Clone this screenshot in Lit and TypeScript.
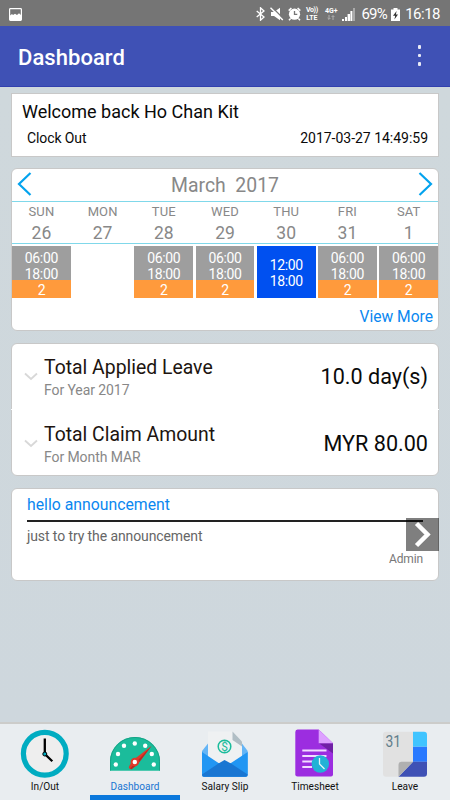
import { LitElement, html, css, svg } from "lit";
import { customElement } from "lit/decorators.js";
import { classMap } from "lit/directives/class-map.js";

interface Day {
  name: string;
  date: string;
  from?: string;
  to?: string;
  count?: string;
}

const shift = { from: "06:00", to: "18:00", count: "2" };

const DAYS: Day[] = [
  { name: "SUN", date: "26", ...shift },
  { name: "MON", date: "27" },
  { name: "TUE", date: "28", ...shift },
  { name: "WED", date: "29", ...shift },
  { name: "THU", date: "30", from: "12:00", to: "18:00" },
  { name: "FRI", date: "31", ...shift },
  { name: "SAT", date: "1", ...shift },
];

@customElement("status-bar")
class StatusBar extends LitElement {
  static styles = css`
    :host {
      display: flex;
      align-items: center;
      height: 26px;
      box-sizing: border-box;
      padding: 2px 10px 0 9px;
      background: #757575;
      color: #fff;
      font-size: 15px;
      line-height: 24px;
    }
    svg { display: block; flex: none; }
    .gap { flex: 1; }
    .bt { margin-right: 5px; }
    .mute { margin-right: 4px; }
    .alarm { margin-right: 4px; }
    .stack { display: flex; flex-direction: column; align-items: center; font-weight: 700; flex: none; }
    .volte { width: 13px; margin-right: 6px; font-size: 7px; line-height: 8px; }
    .volte .tight { letter-spacing: -.4px; }
    .net { width: 14px; font-size: 7px; line-height: 8px; margin-right: 4px; padding-bottom: 2px; }
    .sig { margin-right: 6px; }
    .pct { letter-spacing: -.7px; }
    .bat { margin: 0 5px 0 4px; }
    .time { letter-spacing: -.5px; }
  `;
  render() {
    return html`
      <svg width="13" height="13" viewBox="0 0 13 13">
        <rect x=".6" y=".6" width="11.8" height="11.8" rx=".8" fill="none" stroke="#fff" stroke-width="1.2" />
        <path d="M1 7.5 3 6 4 7 6 5.8 8 7 10 5.2 12 7V12H1Z" fill="#fff" />
      </svg>
      <span class="gap"></span>
      <svg class="bt" width="9" height="14" viewBox="0 0 9 14">
        <path d="M.7 4 8 10 4.5 13.2V.8L8 4 .7 10" fill="none" stroke="#fff" stroke-width="1.3" />
      </svg>
      <svg class="mute" width="14" height="14" viewBox="0 0 14 14">
        <path d="M1 5H4L10 .8V13.2L4 9H1Z" fill="#fff" />
        <path d="M1.4 -.4 14 12.2" stroke="#757575" stroke-width="1.4" />
        <path d="M.5 .7 12.8 13" stroke="#fff" stroke-width="1.5" />
      </svg>
      <svg class="alarm" width="13" height="14" viewBox="0 0 13 14">
        <circle cx="6.5" cy="7.2" r="5.6" fill="#fff" />
        <path d="M.7 3.6 3.4 1M12.3 3.6 9.6 1M2.6 11.5 1 13.2M10.4 11.5 12 13.2" stroke="#fff" stroke-width="1.5" />
        <path d="M6.5 4V7.4H9.3" fill="none" stroke="#757575" stroke-width="1.3" />
      </svg>
      <span class="stack volte"><span class="tight">Vo))</span><span>LTE</span></span>
      <span class="stack net"><span>4G+</span>
        <svg width="8" height="5" viewBox="0 0 8 5"><path d="M2 0V4.2M.6 3 2 4.4 3.4 3M6 5V.8M4.6 2 6 .6 7.4 2" fill="none" stroke="#b5b5b5" stroke-width=".9" /></svg>
      </span>
      <svg class="sig" width="13" height="13" viewBox="0 0 13 13">
        <path d="M0 11H2V13H0ZM3 9H5V13H3ZM5.6 6H8V13H5.6Z" fill="#fff" />
        <path d="M8.4 3H10.4V13H8.4Z" fill="#fff" />
        <path d="M11 0H13V13H11Z" fill="#aaa" />
      </svg>
      <span class="pct">69%</span>
      <svg class="bat" width="9" height="13" viewBox="0 0 9 13">
        <path d="M2.5 0H6.5V1.5H9V13H0V1.5H2.5Z" fill="#fff" />
        <path d="M5.6 3 2 7.8H4.2L3.4 11.5 7 6.6H4.9Z" fill="#333" />
      </svg>
      <span class="time">16:18</span>
    `;
  }
}

@customElement("app-bar")
class AppBar extends LitElement {
  static styles = css`
    :host {
      display: flex;
      align-items: center;
      justify-content: space-between;
      height: 61px;
      box-sizing: border-box;
      padding: 3px 29px 0 18px;
      background: #3f51b5;
      border-bottom: 1px solid #3240ae;
      color: #fff;
    }
    .title { font-size: 22px; font-weight: 500; line-height: 28px; letter-spacing: .05px; }
    .more { display: flex; flex-direction: column; gap: 5px; padding-bottom: 4px; }
    .dot { width: 3.4px; height: 3.4px; border-radius: 1px; background: #e8eaf6; }
  `;
  render() {
    return html`
      <span class="title">Dashboard</span>
      <span class="more"><i class="dot"></i><i class="dot"></i><i class="dot"></i></span>
    `;
  }
}

@customElement("week-card")
class WeekCard extends LitElement {
  static styles = css`
    :host { display: block; height: 100%; }
    .head {
      display: flex;
      justify-content: space-between;
      height: 32px;
      padding: 0 5px 0 5px;
      border-bottom: 1px solid #80d8ea;
    }
    .head svg { margin-top: 2px; }
    .month { font-size: 19.4px; line-height: 30px; color: #888; padding-top: 2px; white-space: pre; }
    .days { display: grid; grid-template-columns: repeat(7, 1fr); gap: 2.4px; }
    .names {
      height: 42px;
      box-sizing: border-box;
      border-bottom: 1px solid #80d8ea;
      margin-bottom: 2px;
      text-align: center;
      color: #888;
    }
    .name { font-size: 13px; line-height: 18px; padding-top: 1px; letter-spacing: .1px; }
    .date { font-size: 17.5px; line-height: 24px; }
    .cell {
      height: 52px;
      display: flex;
      flex-direction: column;
      color: #fff;
      text-align: center;
      font-size: 14px;
      letter-spacing: -.35px;
      line-height: 16px;
    }
    .shift { background: #9e9e9e; }
    .today { background: #0050f0; }
    .times { height: 34px; padding-top: 4px; box-sizing: border-box; flex: none; }
    .today .times { padding-top: 11px; height: 52px; }
    .count { height: 18px; background: #ff9a3c; line-height: 20px; }
    .more { text-align: right; padding: 8px 5px 0 0; font-size: 15.6px; line-height: 22px; color: #0a87f0; }
  `;
  render() {
    return html`
      <div class="head">
        <svg width="15" height="25" viewBox="0 0 15 25"><path d="M13.5 2 2 13 13.5 24" fill="none" stroke="#03a3ee" stroke-width="2.2" /></svg>
        <span class="month">March  2017</span>
        <svg width="15" height="25" viewBox="0 0 15 25"><path d="M1.5 2 13 13 1.5 24" fill="none" stroke="#03a3ee" stroke-width="2.2" /></svg>
      </div>
      <div class="days names">
        ${DAYS.map((d) => html`<div><div class="name">${d.name}</div><div class="date">${d.date}</div></div>`)}
      </div>
      <div class="days">
        ${DAYS.map(
          (d) => html`<div class=${classMap({ cell: true, shift: !!d.count, today: !!d.from && !d.count })}>
            ${d.from ? html`<div class="times">${d.from}<br />${d.to}</div>` : ""}
            ${d.count ? html`<div class="count">${d.count}</div>` : ""}
          </div>`
        )}
      </div>
      <div class="more">View More</div>
    `;
  }
}

@customElement("tab-bar")
class TabBar extends LitElement {
  static styles = css`
    :host {
      display: grid;
      grid-template-columns: repeat(5, 1fr);
      height: 78px;
      box-sizing: border-box;
      border-top: 2px solid #ccccca;
      background: #e9edf0;
    }
    .tab {
      display: flex;
      flex-direction: column;
      align-items: center;
      border-bottom: 5px solid transparent;
      font-size: 10.1px;
      line-height: 14px;
      color: #111;
    }
    .tab svg { display: block; margin: 4px 0 0; flex: none; }
    .active { color: #1976d2; border-bottom-color: #0b78dc; }
    .num { font-size: 16px; fill: #607d8b; font-family: Roboto, sans-serif; }
    .coin { font-size: 12px; fill: #1bbc9b; font-family: Roboto, sans-serif; text-anchor: middle; }
  `;
  clock() {
    return svg`
      <circle cx="24.8" cy="25.8" r="21.4" fill="#eee" stroke="#00acc1" stroke-width="5.2" />
      <path d="M24.8 10.5V26L32.3 33.3" fill="none" stroke="#000" stroke-width="2.3" />
      <circle cx="24.8" cy="26" r="2" fill="#00acc1" stroke="#000" stroke-width="1" />`;
  }
  gauge() {
    const dots = [[5.8, 36.5], [8, 26], [14, 17.8], [24.8, 15.5], [35.2, 17.8], [41.8, 26], [43.8, 36.5]];
    return svg`
      <path d="M0 42.7V33.5A25 24.5 0 0 1 50 33.5V42.7Z" fill="#1bbc9b" />
      <path d="M.5 42.5V33.5A24.5 24 0 0 1 49.5 33.5V42.5" fill="none" stroke="#16a386" stroke-width="1" />
      ${dots.map(([x, y]) => svg`<circle cx=${x} cy=${y} r="2.2" fill="#fff" />`)}
      <path d="M41.5 18 27.5 36.5 21.5 41.2Q18.5 41.5 19 38.5L22.5 32.5Z" fill="#e03a2b" />
      <path d="M41.5 18 27.5 36.5 21.5 41.2 20 40.5Z" fill="#b92b22" />
      <circle cx="24.8" cy="34" r="4.2" fill="#e03a2b" /><circle cx="24.8" cy="34" r="2.2" fill="#fff" />`;
  }
  slip() {
    return svg`
      <path d="M2 23 8 15.5H42L47.7 23V46.5Q47.7 48.7 45.5 48.7H4Q2 48.7 2 46.5Z" fill="#64b5f6" />
      <path d="M8 3.5H32.5L42 13V36H8Z" fill="#eff1f2" />
      <path d="M32.5 3.5 42 13.5V18.5L32.5 12Z" fill="#b0bec5" />
      <circle cx="24.5" cy="18.5" r="6.3" fill="none" stroke="#1bbc9b" stroke-width="1.5" />
      <text class="coin" x="24.5" y="22.7">$</text>
      <path d="M2 24 18.5 35 24.5 36 31 35 47.7 24V46.5Q47.7 48.7 45.5 48.7H4Q2 48.7 2 46.5Z" fill="#2196f3" />
      <path d="M2 46.5 18.5 35.5 24.5 38 31 35.5 47.7 46.5Q47.7 48.7 45.5 48.7H4Q2 48.7 2 46.5Z" fill="#1976d2" />
      <path d="M18.5 35.5 24.5 32 31 35.5 24.5 39Z" fill="#1976d2" />`;
  }
  sheet() {
    return svg`
      <path d="M7.5 1.5H28.7L43 15.3V46.2Q43 48.5 41 48.5H7.5Q5.3 48.5 5.3 46.2V4Q5.3 1.5 7.5 1.5Z" fill="#9c2de0" />
      <path d="M29 15.3H43V25.5Z" fill="#7020a5" />
      <path d="M28.7 1.5 43 15.3H28.7Z" fill="#dda0ff" />
      <path d="M12.3 22.5H36.5M12.3 28H36.5M12.3 33.5H28M12.3 39H22" stroke="#f2dcff" stroke-width="1.9" />
      <circle cx="30.3" cy="36" r="8.7" fill="#22b2d6" />
      <path d="M29.5 30V36L34.5 41" fill="none" stroke="#e3f6fa" stroke-width="1.3" />`;
  }
  calendar() {
    return svg`
      <path d="M6 3.8H33V33.8L18.5 48.7H6Q3 48.7 3 45.7V6.8Q3 3.8 6 3.8Z" fill="#e1e1e1" />
      <path d="M33 3.8H44Q47 3.8 47 6.8V18.8H33Z" fill="#40c4ff" />
      <path d="M33 18.8H47V33.8H33Z" fill="#2979ff" />
      <path d="M33 33.8H47V45.7Q47 48.7 44 48.7H18.5Z" fill="#3f51b5" />
      <path d="M18.5 48.7V36.8Q18.5 33.8 21.5 33.8H33Z" fill="#b0b0b0" />
      <text class="num" x="5.6" y="18.8" textLength="15.5" lengthAdjust="spacingAndGlyphs">31</text>`;
  }
  render() {
    const tabs = [
      { label: "In/Out", icon: this.clock() },
      { label: "Dashboard", icon: this.gauge(), active: true },
      { label: "Salary Slip", icon: this.slip() },
      { label: "Timesheet", icon: this.sheet() },
      { label: "Leave", icon: this.calendar() },
    ];
    return tabs.map(
      (t) => html`<div class=${classMap({ tab: true, active: !!t.active })}>
        <svg width="50" height="52" viewBox="0 0 50 52">${t.icon}</svg><span>${t.label}</span>
      </div>`
    );
  }
}

@customElement("app-root")
class AppRoot extends LitElement {
  static styles = css`
    :host {
      display: flex;
      flex-direction: column;
      width: 450px;
      height: 800px;
      overflow: hidden;
      background: #cfd8dc;
      font-family: Roboto, "Noto Sans", sans-serif;
      color: #0a0a0a;
    }
    .main { flex: 1; display: flex; flex-direction: column; padding: 6px 11px 0; background: linear-gradient(#cfd8dc, #ced7dd); }
    .card {
      box-sizing: border-box;
      border: 1px solid #c8c8c8;
      border-radius: 6px;
      background: #fff;
      margin-bottom: 12px;
      flex: none;
    }
    .welcome { height: 64px; border-radius: 0; padding: 6px 10px 0; margin-bottom: 11px; }
    .hello { font-size: 18px; line-height: 24px; }
    .row { display: flex; justify-content: space-between; align-items: center; }
    .clock { padding: 5px 0 0 5px; font-size: 14px; letter-spacing: -.1px; line-height: 18px; }
    .stamp { letter-spacing: -.02px; }
    .week { height: 163px; }
    .totals { height: 133px; }
    .total { height: 66px; box-sizing: border-box; padding: 11px 10px 0 12px; align-items: flex-start; }
    .total + .total { margin: -1px -1px 0; padding: 12px 11px 0 13px; border-top: 1px solid #fff; }
    .total svg { margin: 17px 6px 0 0; flex: none; }
    .label { flex: 1; font-size: 19.4px; line-height: 26px; color: #20140f; }
    .sub { font-size: 14px; letter-spacing: -.08px; line-height: 18px; color: #888; }
    .value { font-size: 21.6px; line-height: 28px; padding-top: 8px; }
    .news { height: 93px; position: relative; padding: 5px 15px 0; }
    .subject { font-size: 15.8px; line-height: 22px; color: #0a87f0; padding-bottom: 4px; border-bottom: 2px solid #222; }
    .text { font-size: 14px; letter-spacing: -.1px; line-height: 18px; color: #666; padding-top: 5px; }
    .by { font-size: 12px; letter-spacing: -.15px; line-height: 16px; color: #777; text-align: right; padding-top: 6px; }
    .next { position: absolute; right: -1px; top: 29px; width: 33px; height: 33px; background: rgba(0, 0, 0, .5); }
    .next svg { display: block; }
  `;
  total(label: string, sub: string, value: string) {
    return html`<div class="row total">
      <svg width="14" height="9" viewBox="0 0 14 9"><path d="M1 1.5 7 7 13 1.5" fill="none" stroke="#d8d8d8" stroke-width="1.8" /></svg>
      <div class="label">${label}<div class="sub">${sub}</div></div>
      <div class="value">${value}</div>
    </div>`;
  }
  render() {
    return html`
      <status-bar></status-bar>
      <app-bar></app-bar>
      <div class="main">
        <div class="card welcome">
          <div class="hello">Welcome back Ho Chan Kit</div>
          <div class="row clock"><span>Clock Out</span><span class="stamp">2017-03-27 14:49:59</span></div>
        </div>
        <div class="card week"><week-card></week-card></div>
        <div class="card totals">
          ${this.total("Total Applied Leave", "For Year 2017", "10.0 day(s)")}
          ${this.total("Total Claim Amount", "For Month MAR", "MYR 80.00")}
        </div>
        <div class="card news">
          <div class="subject">hello announcement</div>
          <div class="text">just to try the announcement</div>
          <div class="by">Admin</div>
          <div class="next">
            <svg width="33" height="33" viewBox="0 0 33 33"><path d="M10.5 5.5 21.5 16.5 10.5 27.5" fill="none" stroke="#fff" stroke-width="4.5" /></svg>
          </div>
        </div>
      </div>
      <tab-bar></tab-bar>
    `;
  }
}
